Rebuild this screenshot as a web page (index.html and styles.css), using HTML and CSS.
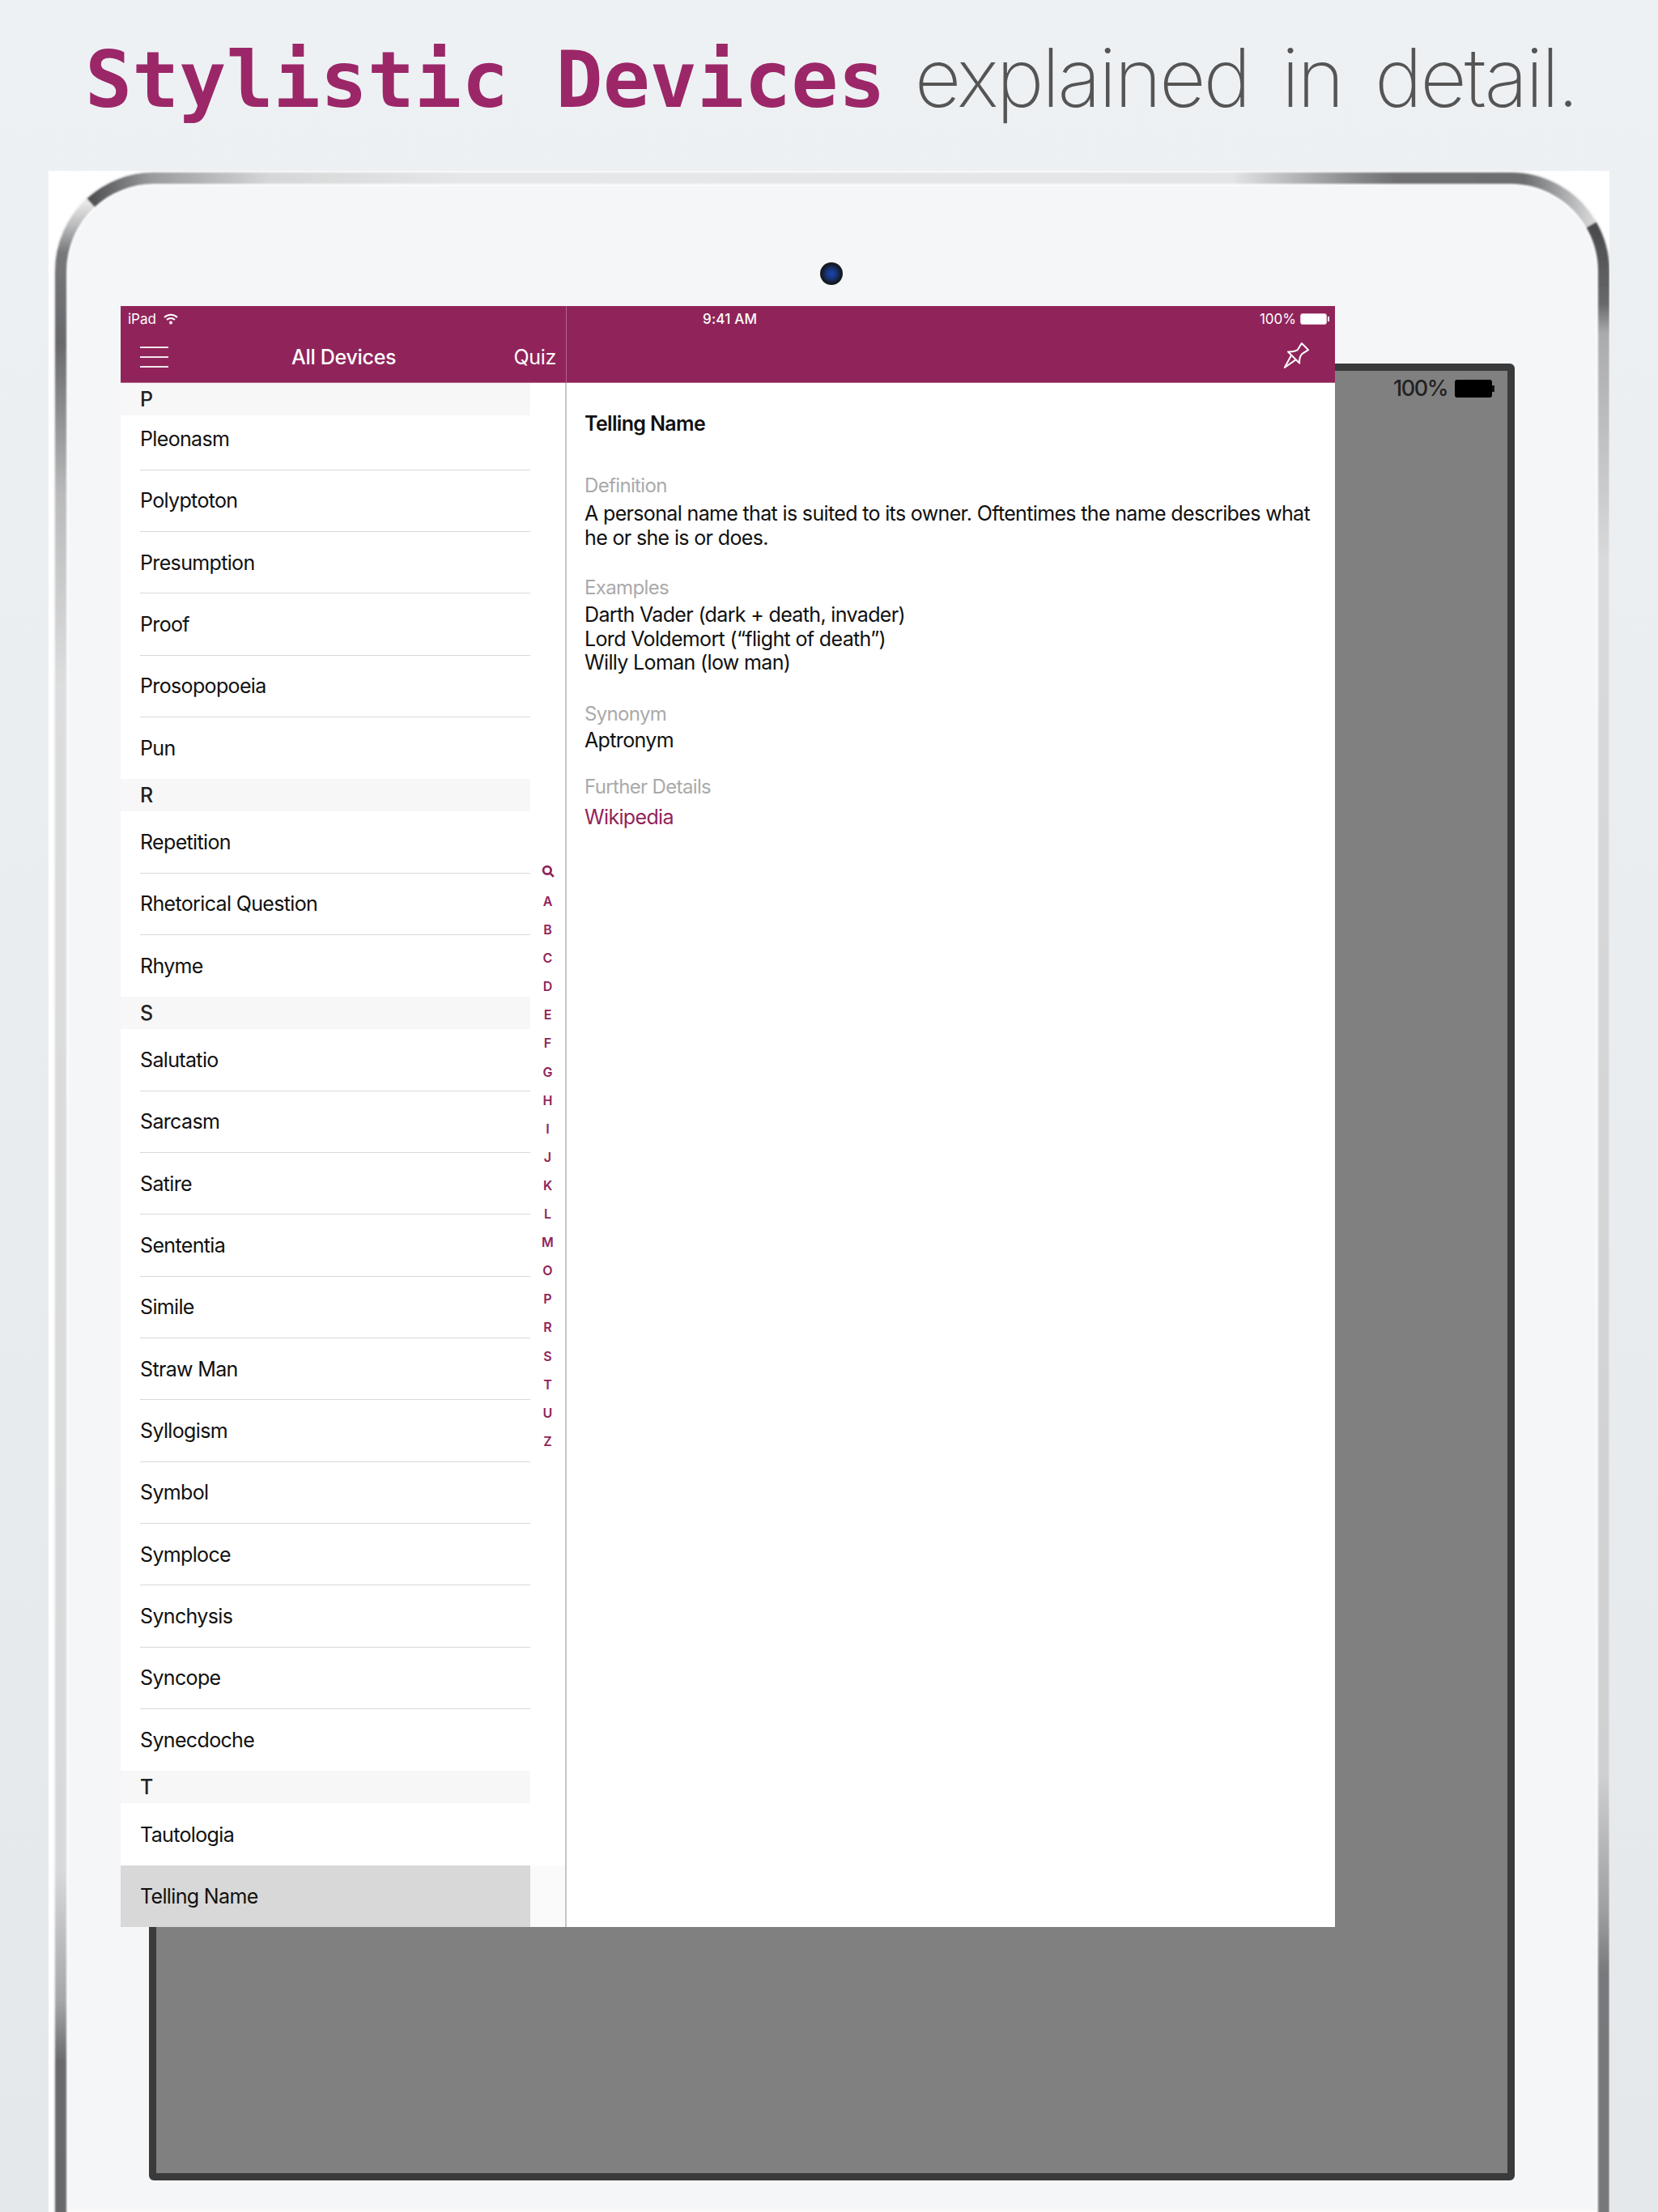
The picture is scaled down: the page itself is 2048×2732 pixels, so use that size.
FILE: index.html
```html
<!DOCTYPE html>
<html lang="en">
<head>
  <meta charset="UTF-8">
  <title>Stylistic Devices</title>
  <link rel="stylesheet" href="styles.css">
</head>
<body>
  <h1 class="headline"><strong>Stylistic Devices</strong> <span>explained in detail.</span></h1>

  <div class="device">
    <!-- tablet frame, coordinates are page pixels -->
    <svg class="bezel" viewBox="60 211 1928 2521" aria-hidden="true">
      <defs>
        <linearGradient id="edgeTop" gradientUnits="userSpaceOnUse" x1="112" y1="0" x2="1966" y2="0">
          <stop offset="0" stop-color="#4f5052"/>
          <stop offset="0.04" stop-color="#999a9c"/>
          <stop offset="0.12" stop-color="#d6d7d8"/>
          <stop offset="0.25" stop-color="#e6e7e8"/>
          <stop offset="0.76" stop-color="#e4e5e6"/>
          <stop offset="0.84" stop-color="#8a8b8d"/>
          <stop offset="0.87" stop-color="#6f7072"/>
          <stop offset="0.955" stop-color="#6d6e70"/>
          <stop offset="1" stop-color="#d5d6d7"/>
        </linearGradient>
        <linearGradient id="edgeLeft" gradientUnits="userSpaceOnUse" x1="0" y1="250" x2="0" y2="2732">
          <stop offset="0" stop-color="#e8e8e9"/>
          <stop offset="0.012" stop-color="#b8b9ba"/>
          <stop offset="0.025" stop-color="#77787a"/>
          <stop offset="0.07" stop-color="#68696b"/>
          <stop offset="0.145" stop-color="#b9babb"/>
          <stop offset="0.24" stop-color="#dcddde"/>
          <stop offset="0.83" stop-color="#d8d9da"/>
          <stop offset="0.895" stop-color="#a5a6a8"/>
          <stop offset="0.925" stop-color="#6a6b6d"/>
          <stop offset="1" stop-color="#68696b"/>
        </linearGradient>
        <linearGradient id="edgeRight" gradientUnits="userSpaceOnUse" x1="0" y1="277" x2="0" y2="2732">
          <stop offset="0" stop-color="#48494b"/>
          <stop offset="0.04" stop-color="#68696b"/>
          <stop offset="0.055" stop-color="#aaabad"/>
          <stop offset="0.17" stop-color="#d9dadb"/>
          <stop offset="0.78" stop-color="#cfd0d1"/>
          <stop offset="0.85" stop-color="#9d9ea0"/>
          <stop offset="0.88" stop-color="#78797b"/>
          <stop offset="1" stop-color="#77787a"/>
        </linearGradient>
        <filter id="soft"><feGaussianBlur stdDeviation="0.8"/></filter>
      </defs>
      <path class="bezel-face" d="M75 2740V335A115 115 0 0 1 190 220H1866A115 115 0 0 1 1981 335V2740Z"/>
      <g class="bezel-edges" filter="url(#soft)">
        <path stroke="url(#edgeLeft)" d="M75 2740V335A115 115 0 0 1 112 250.500"/>
        <path stroke="url(#edgeTop)" d="M112 250.500A115 115 0 0 1 190 220H1866A115 115 0 0 1 1965.600 277.500"/>
        <path stroke="url(#edgeRight)" d="M1965.600 277.500A115 115 0 0 1 1981 335V2740"/>
      </g>
    </svg>

    <div class="camera"></div>

    <div class="old-screen">
      <div class="old-status">
        <span>100%</span>
        <i class="old-battery"></i>
      </div>
    </div>

    <div class="app">
      <header class="app-bar">
        <div class="bar-left">
          <div class="status status-left">
            <span>iPad</span>
            <svg class="wifi" viewBox="0 0 18 14" aria-hidden="true">
              <path d="M1 5a11.500 11.500 0 0 1 16 0M4 8a7.200 7.200 0 0 1 10 0"/>
              <circle cx="9" cy="11.500" r="2"/>
            </svg>
          </div>
          <nav class="nav-left">
            <span class="burger"><i></i><i></i><i></i></span>
            <b class="nav-title">All Devices</b>
            <span class="nav-quiz">Quiz</span>
          </nav>
        </div>
        <div class="bar-right">
          <div class="status status-right">
            <span class="clock">9:41 AM</span>
            <span class="percent">100%</span>
            <i class="battery"></i>
          </div>
          <div class="nav-right">
            <svg class="pin" viewBox="0 0 92 95" aria-hidden="true">
              <path d="M65 3L89 27L66 42Q55 55 57 76L15 34Q36 35 49 28Z"/>
              <path d="M27 47L2 92L45 62"/>
            </svg>
          </div>
        </div>
      </header>

      <div class="app-body">
        <aside class="sidebar">
          <div class="list">
            <div class="letter">P</div>
            <div class="row row-cut"><span>Pleonasm</span></div>
            <div class="row"><span>Polyptoton</span></div>
            <div class="row"><span>Presumption</span></div>
            <div class="row"><span>Proof</span></div>
            <div class="row"><span>Prosopopoeia</span></div>
            <div class="row row-last"><span>Pun</span></div>
            <div class="letter">R</div>
            <div class="row"><span>Repetition</span></div>
            <div class="row"><span>Rhetorical Question</span></div>
            <div class="row row-last"><span>Rhyme</span></div>
            <div class="letter">S</div>
            <div class="row"><span>Salutatio</span></div>
            <div class="row"><span>Sarcasm</span></div>
            <div class="row"><span>Satire</span></div>
            <div class="row"><span>Sententia</span></div>
            <div class="row"><span>Simile</span></div>
            <div class="row"><span>Straw Man</span></div>
            <div class="row"><span>Syllogism</span></div>
            <div class="row"><span>Symbol</span></div>
            <div class="row"><span>Symploce</span></div>
            <div class="row"><span>Synchysis</span></div>
            <div class="row"><span>Syncope</span></div>
            <div class="row row-last"><span>Synecdoche</span></div>
            <div class="letter">T</div>
            <div class="row row-last"><span>Tautologia</span></div>
            <div class="row row-last row-selected"><span>Telling Name</span></div>
          </div>
          <div class="index">
            <svg class="index-search" viewBox="0 0 14 14" aria-hidden="true">
              <circle cx="6" cy="6" r="4.200"/>
              <path d="M9 9l4 4"/>
            </svg>
            <span>A</span><span>B</span><span>C</span><span>D</span><span>E</span>
            <span>F</span><span>G</span><span>H</span><span>I</span><span>J</span>
            <span>K</span><span>L</span><span>M</span><span>O</span><span>P</span>
            <span>R</span><span>S</span><span>T</span><span>U</span><span>Z</span>
          </div>
        </aside>

        <main class="detail">
          <h2 class="detail-title">Telling Name</h2>
          <section class="block block-definition">
            <h3>Definition</h3>
            <p>A personal name that is suited to its owner. Oftentimes the name describes what he or she is or does.</p>
          </section>
          <section class="block block-examples">
            <h3>Examples</h3>
            <p>Darth Vader (dark + death, invader)<br>Lord Voldemort (“flight of death”)<br>Willy Loman (low man)</p>
          </section>
          <section class="block block-synonym">
            <h3>Synonym</h3>
            <p>Aptronym</p>
          </section>
          <section class="block block-further">
            <h3>Further Details</h3>
            <p><a href="#">Wikipedia</a></p>
          </section>
        </main>
      </div>
    </div>
  </div>
</body>
</html>
```

FILE: styles.css
```css
html, body {
  margin: 0;
  height: 2732px;
  overflow: hidden;
}
body {
  display: flex;
  flex-direction: column;
  background: linear-gradient(#eef1f4, #e4e8eb);
  font-family: Inter, "Noto Sans", sans-serif;
  color: #111;
}

/* headline */
.headline {
  box-sizing: border-box;
  height: 211px;
  margin: 0;
  padding: 36px 0 0 105px;
  font-size: 100px;
  line-height: 120px;
  font-weight: 400;
  white-space: nowrap;
}
.headline strong {
  font-family: "DejaVu Sans Mono", monospace;
  font-size: 96.600px;
  font-weight: 700;
  color: #9b2768;
}
.headline span {
  font-family: Inter, sans-serif;
  font-weight: 200;
  color: #555;
  margin-left: 8px;
  word-spacing: 15px;
  letter-spacing: -3px;
}

/* device */
.device {
  position: relative;
  flex: 1;
  margin: 0 60px;
  padding: 238px 0 0 124px;
  background: #fff;
  overflow: hidden;
}
.bezel {
  position: absolute;
  left: 0;
  top: 0;
  width: 1928px;
  height: 2521px;
}
.bezel-face {
  fill: #f5f6f8;
  stroke: #fbfbfc;
  stroke-width: 20;
}
.bezel-edges path {
  fill: none;
  stroke-width: 14;
}
.camera {
  position: absolute;
  left: 953px;
  top: 113px;
  width: 28px;
  height: 28px;
  border-radius: 50%;
  background: radial-gradient(circle at 50% 50%, #1b44a8 0, #17367f 30%, #15181f 62%, #2a2b2e 85%, rgba(90, 90, 90, 0) 100%);
}
.old-screen {
  position: relative;
  box-sizing: border-box;
  width: 1687px;
  height: 2244px;
  border: 9px solid #3a3a3a;
  border-radius: 6px;
  background: #808080;
}
.old-status {
  display: flex;
  justify-content: flex-end;
  align-items: center;
  gap: 9px;
  padding: 9px 19px 0 0;
  font-size: 27px;
  line-height: 26px;
  font-weight: 500;
  letter-spacing: -1.500px;
  color: #222;
}
.old-battery {
  position: relative;
  width: 46px;
  height: 22px;
  border-radius: 3px;
  background: #000;
}
.old-battery::after {
  content: "";
  position: absolute;
  right: -3px;
  top: 7px;
  width: 3px;
  height: 8px;
  background: #111;
}

/* app */
.app {
  position: absolute;
  left: 89px;
  top: 167px;
  width: 1500px;
  height: 2002px;
  display: flex;
  flex-direction: column;
  background: #fff;
  overflow: hidden;
}
.app-bar {
  display: flex;
  flex: none;
  height: 95px;
  box-sizing: border-box;
  background: #90245a;
  border-bottom: 1px solid #b0628b;
  color: #fff;
}
.bar-left {
  width: 551px;
  box-sizing: border-box;
  border-right: 1px solid #b0628b;
}
.bar-right {
  flex: 1;
}
.status {
  display: flex;
  align-items: center;
  height: 32px;
  font-size: 17px;
}
.status-left {
  padding-left: 9px;
  gap: 9px;
}
.wifi {
  width: 18px;
  height: 14px;
}
.wifi path {
  fill: none;
  stroke: #fff;
  stroke-width: 2;
}
.wifi circle {
  fill: #fff;
}
.status-right {
  padding: 0 10px 0 168px;
}
.clock {
  font-weight: 500;
  letter-spacing: 0.2px;
}
.percent {
  margin-left: auto;
  margin-right: 5px;
}
.battery {
  display: block;
  position: relative;
  box-sizing: border-box;
  width: 33px;
  height: 14px;
  border: 1px solid #e4c7d6;
  border-radius: 3px;
  background: #fff;
}
.battery::after {
  content: "";
  position: absolute;
  right: -4px;
  top: 3px;
  width: 2px;
  height: 6px;
  background: #fff;
}
.nav-left {
  position: relative;
  display: flex;
  align-items: center;
  height: 62px;
  padding-left: 24px;
  font-size: 25px;
  letter-spacing: -0.3px;
}
.burger {
  display: flex;
  flex-direction: column;
  gap: 10px;
  width: 35px;
}
.burger i {
  display: block;
  height: 2px;
  background: #f4e6ed;
}
.nav-title {
  margin-left: 152px;
  font-weight: 500;
}
.nav-quiz {
  margin-left: auto;
  margin-right: 12px;
  font-weight: 400;
}
.nav-right {
  display: flex;
  justify-content: flex-end;
  height: 62px;
  padding: 13px 32px 0 0;
  box-sizing: border-box;
}
.pin {
  width: 31px;
  height: 32px;
}
.pin path {
  fill: none;
  stroke: #fff;
  stroke-width: 6;
  stroke-linejoin: round;
}

.app-body {
  display: flex;
  flex: 1;
  min-height: 0;
}

/* list */
.sidebar {
  position: relative;
  flex: none;
  width: 551px;
  box-sizing: border-box;
  border-right: 2px solid #c6c6c6;
  font-size: 25px;
  letter-spacing: -0.65px;
}
.list {
  display: flex;
  flex-direction: column;
}
.letter {
  flex: none;
  box-sizing: border-box;
  width: 506px;
  height: 40px;
  padding-left: 24px;
  line-height: 40px;
  font-weight: 500;
  color: #222;
  background: #f7f7f7;
}
.row {
  flex: none;
  box-sizing: border-box;
  height: 76.35px;
  width: 506px;
  padding-left: 24px;
}
.row span {
  display: flex;
  align-items: center;
  box-sizing: border-box;
  height: 100%;
  border-bottom: 1px solid #d9d9d9;
}
.row-cut {
  height: 67.500px;
}
.row-cut span {
  padding-bottom: 9px;
}
.row-last span {
  border-bottom: 0;
}
.row-selected {
  background: #d8d8d8;
  box-shadow: 43px 0 0 #fafafa;
}
.index {
  position: absolute;
  left: 506px;
  right: 0;
  top: 585px;
  display: flex;
  flex-direction: column;
  align-items: center;
  color: #90245a;
  font-size: 16px;
  letter-spacing: 0;
  line-height: 35.100px;
  font-weight: 600;
}
.index-search {
  width: 16px;
  height: 16px;
  margin: 10px 0 12px;
}
.index-search circle, .index-search path {
  fill: none;
  stroke: #90245a;
  stroke-width: 2.400;
}

/* detail */
.detail {
  flex: 1;
  padding: 35px 18px 0 22px;
  font-size: 25px;
  line-height: 29.500px;
  letter-spacing: -0.65px;
}
.detail-title {
  margin: 0;
  font-size: 25px;
  line-height: 30px;
  font-weight: 600;
}
.block h3 {
  margin: 0;
  font-size: 24px;
  line-height: 30px;
  font-weight: 400;
  color: #aaa;
}
.block p {
  margin: 0;
}
.block a {
  color: #90245a;
  text-decoration: none;
}
.block-definition {
  margin-top: 47px;
}
.block-definition h3 {
  margin-bottom: 5px;
}
.block-examples {
  margin-top: 32px;
}
.block-examples h3 {
  margin-bottom: 4px;
}
.block-synonym {
  margin-top: 33px;
}
.block-synonym h3 {
  margin-bottom: 3px;
}
.block-further {
  margin-top: 28px;
}
.block-further h3 {
  margin-bottom: 8px;
}
```
